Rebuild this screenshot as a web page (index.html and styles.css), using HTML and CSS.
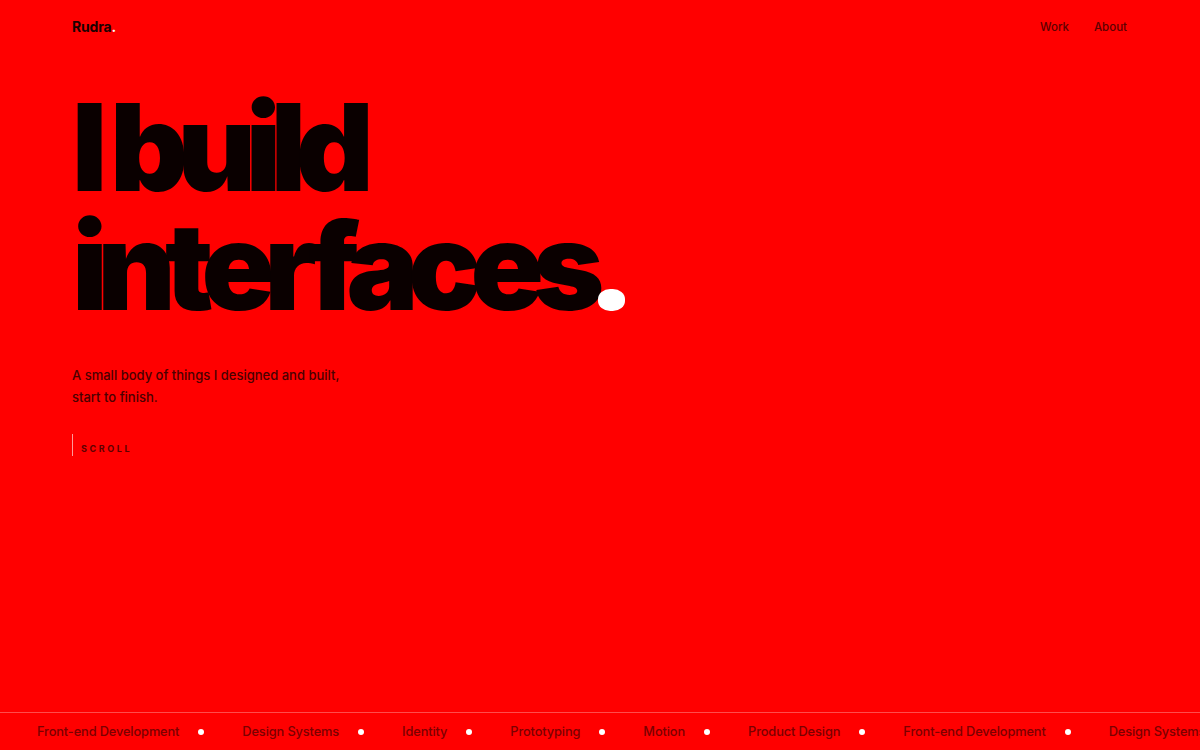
FILE: index.html
```html
<!DOCTYPE html>
<html>
<head>
<meta charset="utf-8">
<link rel="stylesheet" href="styles.css">
</head>
<body>
<div class="page">
  <header class="nav">
    <div class="logo">Rudra<span class="dot">.</span></div>
    <nav class="links"><a>Work</a><a>About</a></nav>
  </header>
  <main class="hero">
    <h1 class="title">I build<br>interfaces<span class="tdot"></span></h1>
    <p class="sub">A small body of things I designed and built,<br>start to finish.</p>
    <div class="scroll"><span class="bar"></span><span class="label">SCROLL</span></div>
  </main>
  <footer class="marquee">
    <div class="track">
      <span class="item">Front-end Development</span><span class="sep"></span>
      <span class="item">Design Systems</span><span class="sep"></span>
      <span class="item">Identity</span><span class="sep"></span>
      <span class="item">Prototyping</span><span class="sep"></span>
      <span class="item">Motion</span><span class="sep"></span>
      <span class="item">Product Design</span><span class="sep"></span>
      <span class="item">Front-end Development</span><span class="sep"></span>
      <span class="item">Design Systems</span><span class="sep"></span>
    </div>
  </footer>
</div>
</body>
</html>
```
FILE: styles.css
```css
* { box-sizing: border-box; }
html, body { margin: 0; padding: 0; }
body {
  background: #ff0000;
  font-family: Inter, "Liberation Sans", sans-serif;
  color: #0a0000;
  width: 1200px;
  height: 750px;
  overflow: hidden;
}
.page {
  height: 750px;
  display: flex;
  flex-direction: column;
}
.nav {
  display: flex;
  justify-content: space-between;
  align-items: center;
  padding: 17px 73px 0 72px;
  height: 36px;
}
.logo {
  font-weight: 700;
  font-size: 14px;
  letter-spacing: -0.2px;
  color: #1a0000;
}
.logo .dot { color: #fff; }
.links { display: flex; gap: 25px; }
.links a {
  font-size: 11.5px;
  color: #5c0000;
  font-weight: 500;
}
.hero {
  flex: 1;
  padding: 52px 72px 0 72px;
}
.title {
  margin: 0;
  font-size: 121px;
  font-weight: 900;
  line-height: 119px;
  letter-spacing: -0.088em;
  color: #0a0000;
}
.tdot {
  display: inline-block;
  width: 27px;
  height: 22px;
  background: #fff;
  border-radius: 45%;
  margin-left: 4px;
  vertical-align: -1px;
}
.sub {
  margin: 38px 0 0 0;
  font-size: 13px;
  font-weight: 500;
  line-height: 22px;
  color: #4a0000;
}
.scroll {
  margin-top: 26px;
  display: flex;
  align-items: center;
  height: 22px;
}
.bar {
  width: 1px;
  height: 22px;
  background: #ff9a9a;
}
.label {
  margin-left: 8px;
  margin-top: 6px;
  font-size: 9px;
  font-weight: 700;
  letter-spacing: 2.6px;
  color: #5c0000;
}
.marquee {
  height: 38px;
  border-top: 1px solid rgba(255,255,255,0.3);
  overflow: hidden;
  display: flex;
  align-items: center;
}
.track {
  display: flex;
  align-items: center;
  white-space: nowrap;
  padding-left: 37px;
}
.item {
  font-size: 12.8px;
  font-weight: 500;
  letter-spacing: -0.12px;
  color: #7a0000;
}
.sep {
  width: 6px;
  height: 6px;
  border-radius: 50%;
  background: #fff;
  margin: 0 38px 0 19px;
}
```
